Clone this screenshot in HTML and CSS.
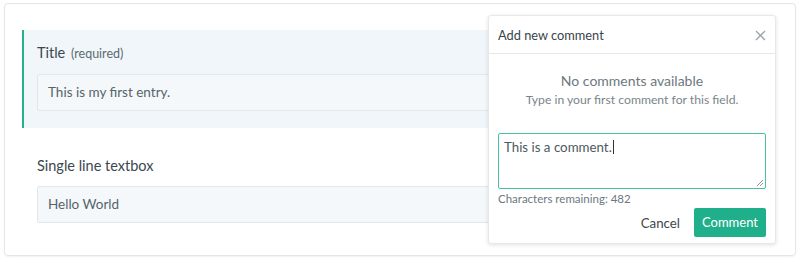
FILE: index.html
```html
<!DOCTYPE html>
<html>
<head>
<meta charset="utf-8">
<link rel="stylesheet" href="styles.css">
</head>
<body>
<div class="card">
  <div class="field field-active">
    <div class="label">Title <span class="req">(required)</span></div>
    <div class="input">This is my first entry.</div>
  </div>
  <div class="field field-plain">
    <div class="label">Single line textbox</div>
    <div class="input">Hello World</div>
  </div>

  <div class="popup">
    <div class="popup-head">
      <span class="popup-title">Add new comment</span>
      <svg class="close" width="11" height="11" viewBox="0 0 11 11"><path d="M1 1 L10 10 M10 1 L1 10" stroke="#9aa3a8" stroke-width="1.3" fill="none"/></svg>
    </div>
    <div class="popup-body">
      <div class="empty">
        <div class="empty-title">No comments available</div>
        <div class="empty-sub">Type in your first comment for this field.</div>
      </div>
      <div class="textarea">
        <span class="ta-text">This is a comment.</span><span class="caret"></span>
        <svg class="grip" width="8" height="8" viewBox="0 0 8 8"><path d="M7 1 L1 7 M7 4 L4 7" stroke="#8a9499" stroke-width="1" fill="none"/></svg>
      </div>
      <div class="remaining">Characters remaining: 482</div>
      <div class="actions">
        <span class="cancel">Cancel</span>
        <span class="btn">Comment</span>
      </div>
    </div>
  </div>
</div>
</body>
</html>
```
FILE: styles.css
```css
* { box-sizing: border-box; }
body {
  margin: 0;
  padding: 3px 4px;
  background: #ffffff;
  font-family: "Lato", "Open Sans", sans-serif;
}
.card {
  position: relative;
  width: 792px;
  height: 253px;
  border: 1px solid #e4e6e7;
  border-radius: 4px;
  box-shadow: 0 1px 2px rgba(0,0,0,0.06);
  padding: 26px 22px 0 17px;
}
.field {
  border-left: 2px solid transparent;
  padding-left: 13px;
  padding-right: 0;
}
.field-active {
  border-left-color: #22b28c;
  background: #f0f6f9;
  padding-top: 13px;
  padding-bottom: 17px;
}
.field-plain {
  padding-top: 28px;
}
.label {
  font-size: 14.5px;
  line-height: 20px;
  color: #3c4850;
  margin-bottom: 10px;
}
.req {
  font-size: 12.5px;
  color: #5d6a72;
  margin-left: 2px;
}
.input {
  height: 37px;
  border: 1px solid #e1e7ea;
  border-radius: 2px;
  background: #f4f8fa;
  padding: 0 10px;
  font-size: 13.5px;
  line-height: 35px;
  color: #56636b;
}
.popup {
  position: absolute;
  left: 483px;
  top: 11px;
  width: 288px;
  height: 229px;
  background: #ffffff;
  border: 1px solid #e6e8e9;
  border-radius: 3px;
  box-shadow: 0 1px 4px rgba(0,0,0,0.12);
  display: flex;
  flex-direction: column;
}
.popup-head {
  height: 38px;
  border-bottom: 1px solid #e6e8e9;
  display: flex;
  align-items: center;
  justify-content: space-between;
  padding: 0 9px 0 9px;
}
.popup-title {
  font-size: 12.8px;
  color: #3a444a;
}
.close { display: block; margin-top: 1px; }
.popup-body {
  padding: 0 9px;
  display: flex;
  flex-direction: column;
}
.empty {
  text-align: center;
  padding-top: 18px;
  height: 79px;
}
.empty-title {
  font-size: 14px;
  line-height: 18px;
  color: #6d787f;
}
.empty-sub {
  font-size: 12.2px;
  line-height: 18px;
  color: #7a858b;
  margin-top: 1px;
}
.textarea {
  position: relative;
  height: 56px;
  border: 1px solid #4bbf9f;
  border-radius: 2px;
  padding: 4px 5px;
  font-size: 13.3px;
  line-height: 18px;
  color: #4d5960;
}
.caret {
  display: inline-block;
  width: 1px;
  height: 14px;
  background: #333;
  vertical-align: -2px;
  margin-left: 1px;
}
.grip {
  position: absolute;
  right: 1px;
  bottom: 1px;
}
.remaining {
  font-size: 11.5px;
  line-height: 18px;
  color: #6d787f;
  margin-top: 1px;
}
.actions {
  display: flex;
  justify-content: flex-end;
  align-items: center;
  gap: 14px;
  margin-top: 0;
}
.cancel {
  font-size: 13.3px;
  color: #3d474d;
}
.btn {
  display: inline-block;
  width: 72px;
  text-align: center;
  height: 29px;
  line-height: 29px;
  background: #1fb08b;
  border-radius: 2px;
  color: #ffffff;
  font-size: 13px;
}
```
